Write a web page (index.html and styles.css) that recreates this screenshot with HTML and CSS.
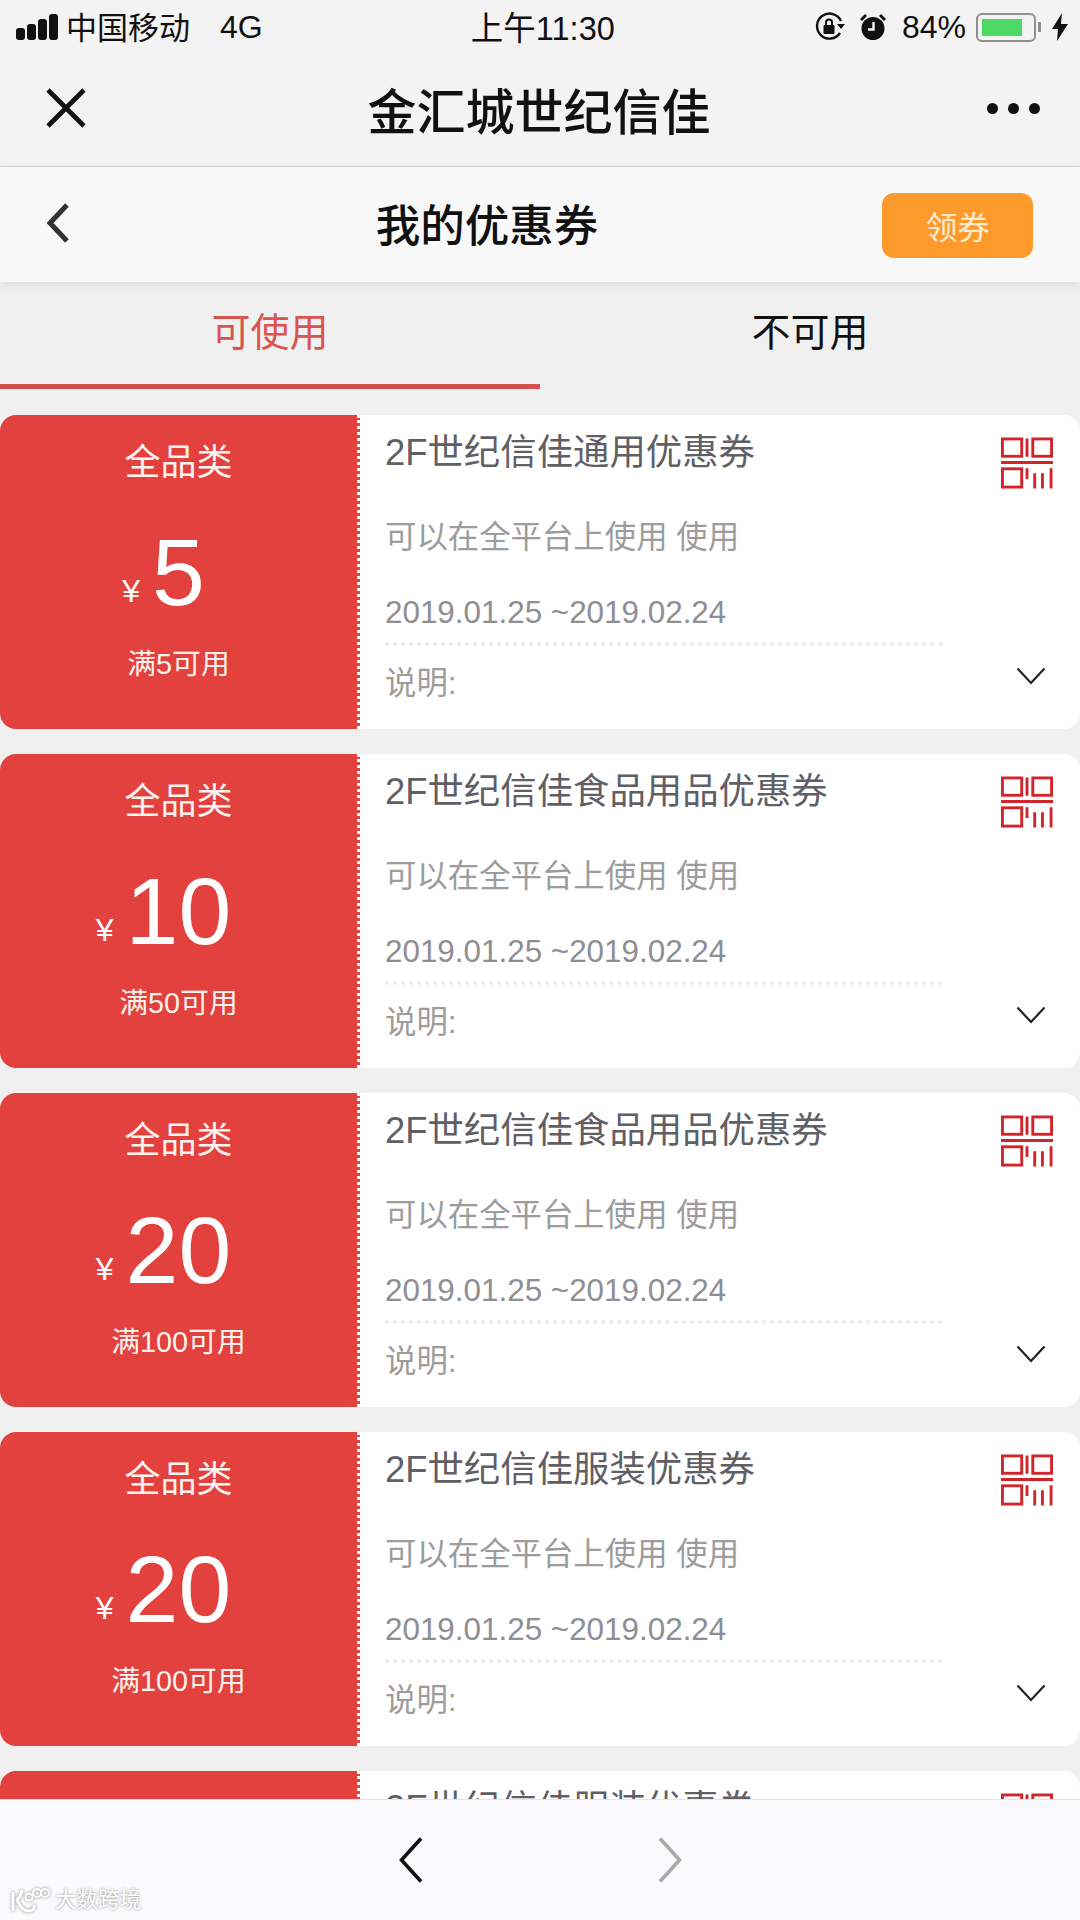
FILE: index.html
```html
<!DOCTYPE html>
<html lang="zh-CN">
<head>
    <meta charset="UTF-8">
    <meta name="viewport" content="width=device-width, initial-scale=1.0">
    <title>我的优惠券</title>
    <link rel="stylesheet" href="styles.css">
</head>
<body>
    <svg class="defs" width="0" height="0">
        <symbol id="qr" viewBox="0 0 54 54">
            <g fill="none" stroke="#d2252b" stroke-width="3">
                <rect x="1.500" y="1.500" width="20" height="18"/>
                <rect x="33" y="1.500" width="19.500" height="18"/>
                <rect x="1.500" y="32.500" width="20" height="19"/>
                <path d="M27 1v19M0 26h54M27 32v11M35 37v16M43 37v16M52 32v21"/>
            </g>
        </symbol>
        <symbol id="down" viewBox="0 0 30 18">
            <path d="M1.500 1.500L15 16L28.500 1.500" fill="none" stroke="#222" stroke-width="2.200"/>
        </symbol>
    </svg>

    <div class="statusbar">
        <div class="status-left">
            <div class="signal"><i></i><i></i><i></i><i></i></div>
            <span class="carrier">中国移动</span>
            <span class="net">4G</span>
        </div>
        <div class="clock">上午11:30</div>
        <div class="status-right">
            <svg class="lock-icon" width="30" height="30" viewBox="0 0 30 30">
                <path d="M25 21A12.500 12.500 0 1 1 26 9" fill="none" stroke="#111" stroke-width="2.400"/>
                <path d="M22 12h8l-4 5z" fill="#111"/>
                <rect x="8.500" y="13" width="11" height="9" rx="1" fill="#111"/>
                <path d="M11 13v-2.500a3 3 0 0 1 6 0V13" fill="none" stroke="#111" stroke-width="2"/>
            </svg>
            <svg class="alarm-icon" width="28" height="28" viewBox="0 0 28 28">
                <circle cx="14" cy="15.500" r="11.500" fill="#111"/>
                <path d="M1 6l5-5 2 2-5 5zM27 6l-5-5-2 2 5 5z" fill="#111"/>
                <path d="M14.500 9v7.500H9" fill="none" stroke="#f3f3f3" stroke-width="2.400"/>
            </svg>
            <span class="battery-pct">84%</span>
            <div class="battery"><div class="battery-fill"></div></div>
            <div class="battery-cap"></div>
            <svg class="bolt" width="16" height="28" viewBox="0 0 16 28">
                <path d="M10 0L0 16h6L5 28l11-17H9z" fill="#111"/>
            </svg>
        </div>
    </div>

    <div class="navbar">
        <svg width="40" height="40" viewBox="0 0 40 40">
            <path d="M2 2L38 38M38 2L2 38" fill="none" stroke="#111" stroke-width="4.600"/>
        </svg>
        <div class="nav-title">金汇城世纪信佳</div>
        <div class="more"><i></i><i></i><i></i></div>
    </div>

    <div class="subbar">
        <svg class="sub-back" width="24" height="40" viewBox="0 0 24 40">
            <path d="M21 2L4 20L21 38" fill="none" stroke="#333" stroke-width="5"/>
        </svg>
        <div class="sub-title">我的优惠券</div>
        <button class="get-btn">领券</button>
    </div>

    <div class="tabs">
        <div class="tab active">可使用</div>
        <div class="tab">不可用</div>
    </div>

    <div class="list">
        <div class="card">
            <div class="card-left">
                <div class="cat">全品类</div>
                <div class="amount"><span class="yen">¥</span><span class="num">5</span></div>
                <div class="cond">满5可用</div>
            </div>
            <div class="card-right">
                <div class="title-row">
                    <div class="title">2F世纪信佳通用优惠券</div>
                    <svg class="qr"><use href="#qr"/></svg>
                </div>
                <div class="desc">可以在全平台上使用 使用</div>
                <div class="date">2019.01.25 ~2019.02.24</div>
                <div class="dots"></div>
                <div class="note-row">
                    <span>说明:</span>
                    <svg class="down"><use href="#down"/></svg>
                </div>
            </div>
        </div>

        <div class="card">
            <div class="card-left">
                <div class="cat">全品类</div>
                <div class="amount"><span class="yen">¥</span><span class="num">10</span></div>
                <div class="cond">满50可用</div>
            </div>
            <div class="card-right">
                <div class="title-row">
                    <div class="title">2F世纪信佳食品用品优惠券</div>
                    <svg class="qr"><use href="#qr"/></svg>
                </div>
                <div class="desc">可以在全平台上使用 使用</div>
                <div class="date">2019.01.25 ~2019.02.24</div>
                <div class="dots"></div>
                <div class="note-row">
                    <span>说明:</span>
                    <svg class="down"><use href="#down"/></svg>
                </div>
            </div>
        </div>

        <div class="card">
            <div class="card-left">
                <div class="cat">全品类</div>
                <div class="amount"><span class="yen">¥</span><span class="num">20</span></div>
                <div class="cond">满100可用</div>
            </div>
            <div class="card-right">
                <div class="title-row">
                    <div class="title">2F世纪信佳食品用品优惠券</div>
                    <svg class="qr"><use href="#qr"/></svg>
                </div>
                <div class="desc">可以在全平台上使用 使用</div>
                <div class="date">2019.01.25 ~2019.02.24</div>
                <div class="dots"></div>
                <div class="note-row">
                    <span>说明:</span>
                    <svg class="down"><use href="#down"/></svg>
                </div>
            </div>
        </div>

        <div class="card">
            <div class="card-left">
                <div class="cat">全品类</div>
                <div class="amount"><span class="yen">¥</span><span class="num">20</span></div>
                <div class="cond">满100可用</div>
            </div>
            <div class="card-right">
                <div class="title-row">
                    <div class="title">2F世纪信佳服装优惠券</div>
                    <svg class="qr"><use href="#qr"/></svg>
                </div>
                <div class="desc">可以在全平台上使用 使用</div>
                <div class="date">2019.01.25 ~2019.02.24</div>
                <div class="dots"></div>
                <div class="note-row">
                    <span>说明:</span>
                    <svg class="down"><use href="#down"/></svg>
                </div>
            </div>
        </div>

        <div class="card">
            <div class="card-left"></div>
            <div class="card-right">
                <div class="title-row">
                    <div class="title">2F世纪信佳服装优惠券</div>
                    <svg class="qr"><use href="#qr"/></svg>
                </div>
            </div>
        </div>
    </div>

    <div class="toolbar">
        <svg width="24" height="46" viewBox="0 0 24 46">
            <path d="M22 1.500L2.500 23L22 44.500" fill="none" stroke="#111" stroke-width="3.600"/>
        </svg>
        <svg width="24" height="46" viewBox="0 0 24 46">
            <path d="M2 1.500L21.500 23L2 44.500" fill="none" stroke="#aaa" stroke-width="3.600"/>
        </svg>

        <div class="watermark">
            <svg class="wm-logo" width="40" height="26" viewBox="0 0 40 26">
                <path d="M3 5v19M12 3C11 9 9 11 7 13C9 18 13 24 19 24C23 24 25 21 24 18" fill="none" stroke="#fff" stroke-width="3"/>
                <circle cx="19" cy="10" r="3.500" fill="none" stroke="#fff" stroke-width="2"/>
                <circle cx="27" cy="6" r="4" fill="none" stroke="#fff" stroke-width="2"/>
                <circle cx="35" cy="6" r="4" fill="none" stroke="#fff" stroke-width="2"/>
            </svg>
            <span>大数跨境</span>
        </div>
    </div>
</body>
</html>
```

FILE: styles.css
```css
* {
    box-sizing: border-box;
}

body {
    margin: 0;
    padding: 0;
    width: 1080px;
    height: 1920px;
    display: flex;
    flex-direction: column;
    overflow: hidden;
    background-color: #f0f0f1;
    font-family: "Liberation Sans", "Noto Sans CJK SC", sans-serif;
    color: #111;
}

.defs {
    position: absolute;
}

/* status bar */
.statusbar {
    height: 54px;
    flex: none;
    display: flex;
    align-items: center;
    justify-content: space-between;
    padding: 0 12px 0 16px;
    background-color: #f3f3f3;
    font-size: 31px;
}

.status-left {
    display: flex;
    align-items: center;
}

.signal {
    display: flex;
    align-items: flex-end;
    gap: 2px;
    height: 26px;
    margin-right: 8px;
}

.signal i {
    width: 9px;
    background-color: #111;
    border-radius: 3px;
}

.signal i:nth-child(1) { height: 12px; }
.signal i:nth-child(2) { height: 16px; }
.signal i:nth-child(3) { height: 21px; }
.signal i:nth-child(4) { height: 26px; }

.carrier {
    margin-top: -4px;
}

.net {
    margin-left: 30px;
    font-size: 32px;
}

.clock {
    font-size: 32.500px;
    margin-left: 8px;
    margin-top: -4px;
}

.status-right {
    display: flex;
    align-items: center;
}

.lock-icon {
    margin-right: 14px;
}

.battery-pct {
    font-size: 32px;
    margin-left: 15px;
    margin-right: 10px;
}

.battery {
    width: 60px;
    height: 29px;
    padding: 4px;
    border: 2px solid #8f8f8f;
    border-radius: 6px;
}

.battery-fill {
    width: 84%;
    height: 100%;
    background-color: #4cd964;
}

.battery-cap {
    width: 3px;
    height: 10px;
    margin-left: 2px;
    background-color: #8f8f8f;
}

.bolt {
    margin-left: 11px;
}

/* top nav */
.navbar {
    height: 113px;
    flex: none;
    display: flex;
    align-items: center;
    justify-content: space-between;
    padding: 0 40px 4px 46px;
    background-color: #f3f3f3;
    border-bottom: 1px solid #d8d8d8;
}

.nav-title {
    font-size: 49px;
    font-weight: 500;
    margin-left: 5px;
}

.more {
    display: flex;
    gap: 10px;
}

.more i {
    width: 11px;
    height: 11px;
    border-radius: 50%;
    background-color: #111;
}

.subbar {
    height: 115px;
    flex: none;
    display: flex;
    align-items: center;
    padding: 0 47px 4px 46px;
    background-color: #f8f8f8;
    box-shadow: 0 2px 8px rgba(0, 0, 0, 0.1);
    position: relative;
}

.sub-title {
    flex: 1;
    text-align: center;
    font-size: 44.500px;
    font-weight: 500;
    margin-left: 22px;
}

.get-btn {
    width: 151px;
    height: 65px;
    border: none;
    border-radius: 12px;
    background-color: #fe9a2b;
    color: #fdeccf;
    font-family: inherit;
    font-size: 32px;
    padding: 0;
    margin-top: 5px;
}

.tabs {
    height: 107px;
    flex: none;
    display: flex;
}

.tab {
    width: 540px;
    height: 107px;
    padding-top: 23px;
    text-align: center;
    font-size: 39px;
    line-height: 56px;
}

.tab.active {
    color: #d9534f;
    border-bottom: 5px solid #d4504e;
}

/* coupons */
.list {
    flex: none;
    height: 1410px;
    overflow: hidden;
    padding-top: 26px;
}

.card {
    height: 314px;
    margin-bottom: 25px;
    display: flex;
}

.card-left {
    width: 360px;
    flex: none;
    background-color: #e2413e;
    border-right: 3px dotted #fff;
    border-radius: 16px 0 0 16px;
    color: #fdf3ee;
    text-align: center;
    padding-top: 26px;
}

.cat {
    font-size: 36px;
    line-height: 44px;
}

.amount {
    display: flex;
    justify-content: center;
    align-items: baseline;
    height: 124px;
    margin-top: 25px;
    padding-right: 30px;
    color: #fff;
}

.yen {
    font-size: 32px;
    margin-right: 12px;
    transform: translateY(-3px);
}

.num {
    font-size: 95px;
    line-height: 124px;
}

.cond {
    font-size: 28.800px;
    line-height: 40px;
    margin-top: 10px;
}

.card-right {
    flex: 1;
    min-width: 0;
    background-color: #fff;
    border-radius: 0 16px 16px 0;
    padding: 0 27px 0 25px;
}

.title-row {
    height: 72px;
    display: flex;
    justify-content: space-between;
}

.title {
    font-size: 36.400px;
    line-height: 76px;
    color: #5f5f65;
}

.qr {
    width: 52px;
    height: 53px;
    margin-top: 22px;
}

.desc {
    height: 100px;
    line-height: 102px;
    font-size: 31.400px;
    color: #9c9c9c;
}

.date {
    height: 52px;
    line-height: 52px;
    font-size: 31.400px;
    color: #8e8e93;
}

.dots {
    width: 558px;
    margin-top: 3px;
    border-top: 4px dotted #efe9ef;
}

.note-row {
    height: 68px;
    display: flex;
    align-items: center;
    justify-content: space-between;
    font-size: 31.400px;
    color: #9c9c9c;
}

.down {
    width: 30px;
    height: 18px;
    margin-top: -8px;
    margin-right: 7px;
}

/* bottom toolbar */
.toolbar {
    height: 121px;
    flex: none;
    position: relative;
    display: flex;
    justify-content: center;
    gap: 235px;
    padding-top: 37px;
    background-color: #fafafc;
    border-top: 1px solid #e4e4e6;
}

.watermark {
    position: absolute;
    left: 10px;
    top: 87px;
    display: flex;
    align-items: center;
    gap: 5px;
    font-size: 21.500px;
    line-height: 26px;
    color: #fff;
    text-shadow: 0 0 3px #888;
}

.wm-logo {
    filter: drop-shadow(0 0 1.500px #888);
}
```
